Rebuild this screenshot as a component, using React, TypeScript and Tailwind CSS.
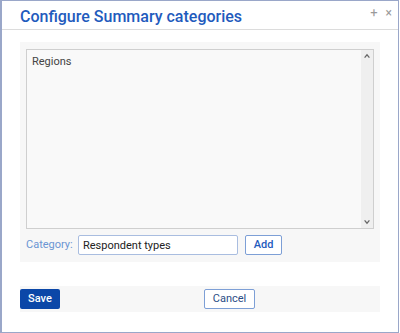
import { useState } from 'react';

export default function App() {
  const [category, setCategory] = useState('Respondent types');

  return (
    <div className="h-[333px] w-[400px] bg-white font-['Roboto',sans-serif]">
      <div className="flex h-[333px] w-[399px] flex-col border border-l-2 border-[#9aa7c9] bg-white">
        <header className="flex h-[29px] items-start justify-between border-b border-[#dcdcdc] pl-[18px] pr-[6px]">
          <h1 className="pt-[6px] text-[16px] leading-[20px] font-medium text-[#1f5bbd]">
            Configure Summary categories
          </h1>
          <div className="flex gap-[8px] pt-[5px] text-[#9a9a9a]">
            <span className="text-[13px] leading-[14px]">+</span>
            <span className="text-[12px] leading-[14px]">×</span>
          </div>
        </header>

        <section className="mx-[18px] mt-[12px] flex h-[220px] flex-col bg-[#f7f7f7] px-[6px] pt-[7px]">
          <div className="flex h-[180px] border border-[#cfcfcf] bg-[#f9f9f9]">
            <div className="flex-1 px-[5px] pt-[5px] text-[11px] leading-[14px] text-[#444]">Regions</div>
            <div className="flex w-[12px] flex-col justify-between bg-[#efefef] py-[2px] text-[#666]">
              <svg viewBox="0 0 10 10" className="h-[8px] w-[12px]">
                <path d="M2 7 L5 3.5 L8 7" fill="none" stroke="currentColor" strokeWidth="1.6" />
              </svg>
              <svg viewBox="0 0 10 10" className="h-[8px] w-[12px]">
                <path d="M2 3 L5 6.5 L8 3" fill="none" stroke="currentColor" strokeWidth="1.6" />
              </svg>
            </div>
          </div>

          <div className="mt-[6px] flex items-center">
            <label className="w-[52px] text-[11px] text-[#6b95d3]">Category:</label>
            <input
              value={category}
              onChange={(e) => setCategory(e.target.value)}
              className="h-[20px] w-[160px] rounded-[2px] border border-[#a9bde0] bg-white px-[4px] text-[11px] text-[#222] outline-none"
            />
            <button className="ml-[7px] h-[20px] w-[37px] rounded-[2px] border border-[#7d9fd6] bg-white text-[11px] font-medium text-[#1f5bbd]">
              Add
            </button>
          </div>
        </section>

        <footer className="mx-[18px] mt-[24px] flex h-[26px] items-center bg-[#f7f7f7]">
          <button className="h-[20px] w-[40px] rounded-[2px] bg-[#0b47a8] text-[11px] font-medium text-white">
            Save
          </button>
          <button className="ml-[144px] h-[20px] w-[51px] rounded-[2px] border border-[#7d9fd6] bg-white text-[11px] text-[#2b4d86]">
            Cancel
          </button>
        </footer>
      </div>
    </div>
  );
}
